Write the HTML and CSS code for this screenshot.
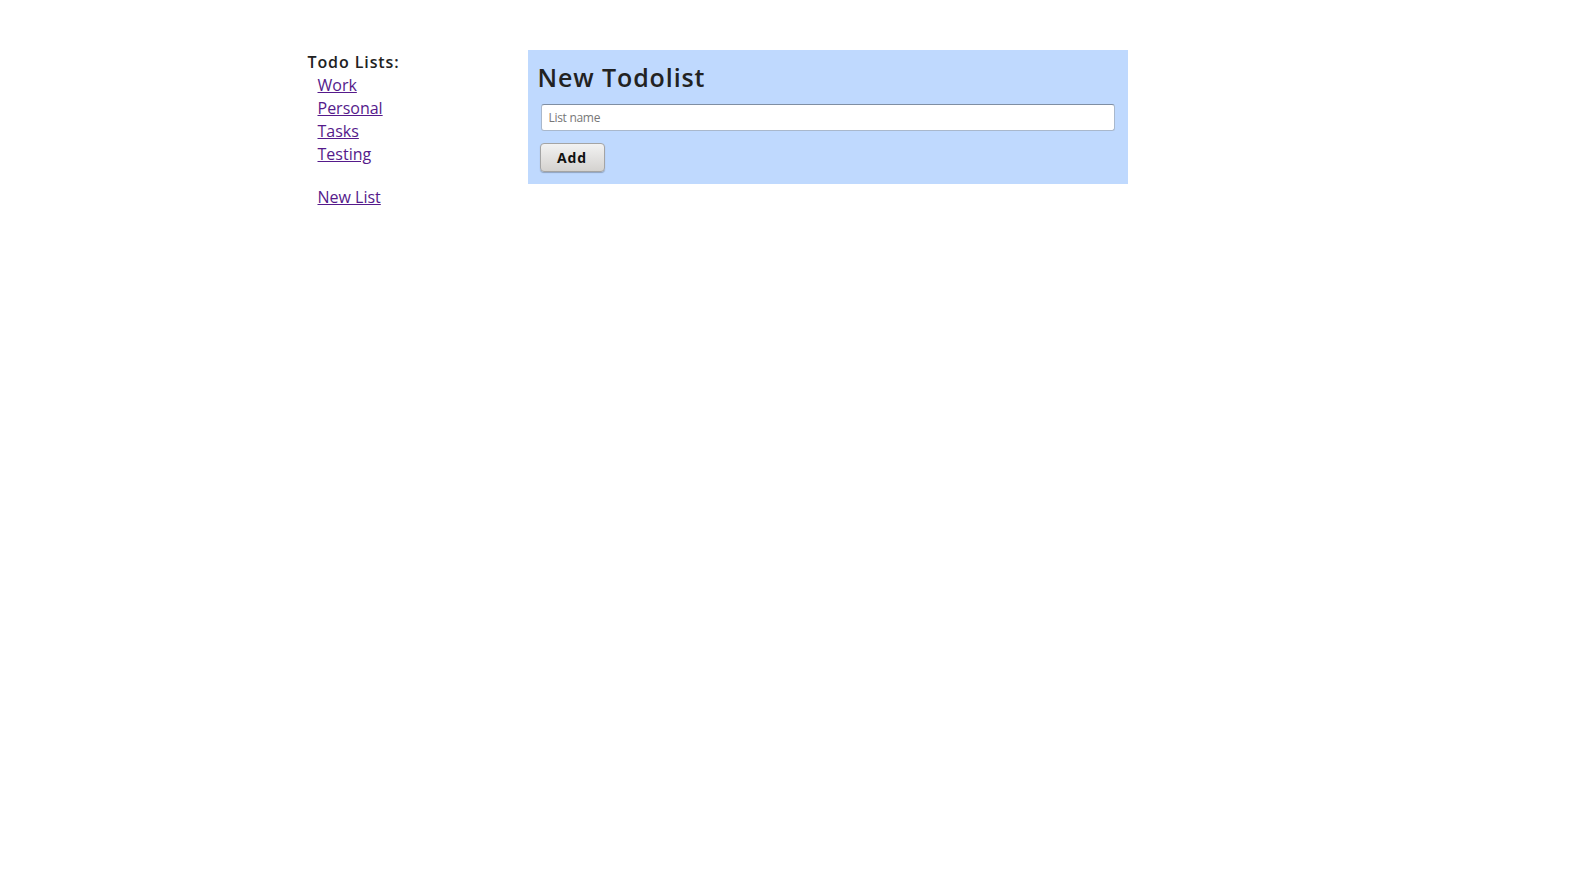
FILE: index.html
```html
<!DOCTYPE html>
<html>
<head>
<meta charset="utf-8">
<link rel="stylesheet" href="styles.css">
</head>
<body>
<div class="page">
  <aside class="sidebar">
    <div class="side-title">Todo Lists:</div>
    <ul class="lists">
      <li><a href="#">Work</a></li>
      <li><a href="#">Personal</a></li>
      <li><a href="#">Tasks</a></li>
      <li><a href="#">Testing</a></li>
    </ul>
    <div class="new-link"><a href="#">New List</a></div>
  </aside>
  <main class="panel">
    <h1 class="panel-title">New Todolist</h1>
    <input class="name-input" type="text" placeholder="List name">
    <button class="add-btn">Add</button>
  </main>
</div>
</body>
</html>
```
FILE: styles.css
```css
html, body {
  margin: 0;
  padding: 0;
  background: #fff;
}
body {
  font-family: "Open Sans", "DejaVu Sans", sans-serif;
  color: #333;
}
.page {
  width: 960px;
  margin: 0 auto;
  padding-top: 50px;
  display: flex;
  align-items: flex-start;
}
.sidebar {
  flex: 0 0 220px;
  font-size: 16px;
  line-height: 23px;
  padding-top: 1px;
}
.side-title {
  font-weight: 600;
  letter-spacing: 0.9px;
  color: #222;
}
.lists {
  list-style: none;
  margin: 0;
  padding: 0 0 0 10px;
}
.lists a, .new-link a {
  color: #551a8b;
  text-decoration: underline;
}
.new-link {
  margin-top: 20px;
  padding-left: 10px;
}
.panel {
  width: 580px;
  background: #bfd9fe;
  padding: 10px 10px 12px 10px;
  display: flex;
  flex-direction: column;
  align-items: flex-start;
}
.panel-title {
  margin: 0;
  font-size: 25px;
  font-weight: 600;
  letter-spacing: 0.9px;
  line-height: 34px;
  color: #222;
}
.name-input {
  margin: 10px 0 0 3px;
  box-sizing: border-box;
  width: 574px;
  height: 27px;
  border: 1px solid #a9b8cc;
  border-top-color: #7f8ea3;
  border-radius: 3px;
  background: #fff;
  padding: 0 7px;
  font-family: "Open Sans", sans-serif;
  font-size: 12px;
  color: #333;
  outline: none;
}
.name-input::placeholder {
  color: #777;
  letter-spacing: -0.3px;
}
.add-btn {
  margin: 12px 0 0 2px;
  box-sizing: border-box;
  width: 65px;
  height: 29px;
  border: 1px solid #a4a4a4;
  border-radius: 4px;
  background: linear-gradient(#f2f2f2, #d4d2cf);
  box-shadow: 0 1px 1px rgba(0,0,0,0.25);
  font-family: "Open Sans", sans-serif;
  font-weight: 700;
  font-size: 14px;
  letter-spacing: 0.8px;
  color: #111;
  padding: 0;
}
```
